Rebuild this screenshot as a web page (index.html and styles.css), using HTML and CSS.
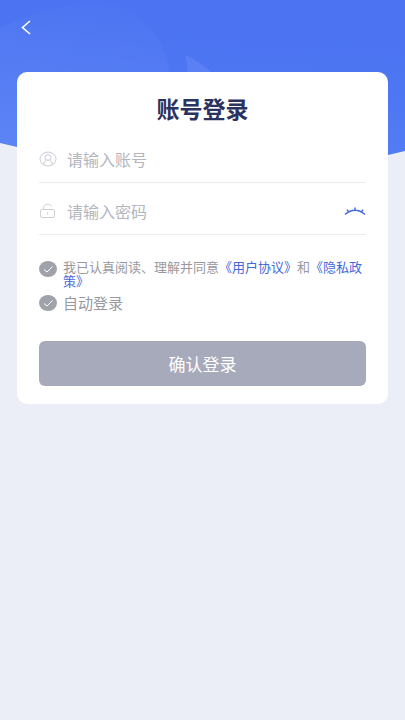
FILE: index.html
```html
<!DOCTYPE html>
<html lang="zh-CN">
<head>
<meta charset="utf-8">
<meta name="viewport" content="width=device-width, initial-scale=1">
<title>账号登录</title>
<link rel="stylesheet" href="styles.css">
</head>
<body>
<svg class="backdrop" viewBox="0 0 405 220" preserveAspectRatio="none" aria-hidden="true">
  <defs>
    <linearGradient id="sky" x1="0.6" y1="0" x2="0.5" y2="1">
      <stop offset="0" stop-color="#4b73f2"/>
      <stop offset="0.5" stop-color="#4e77f3"/>
      <stop offset="1" stop-color="#5682f6"/>
    </linearGradient>
    <linearGradient id="glow" x1="0.6" y1="0" x2="0.4" y2="1">
      <stop offset="0" stop-color="#fff" stop-opacity="0.01"/>
      <stop offset="0.6" stop-color="#fff" stop-opacity="0.05"/>
    </linearGradient>
  </defs>
  <path fill="url(#sky)" d="M0 0H405V151L388 155L230 190Q205 195 180 188L17 147L0 143Z"/>
  <path fill="url(#glow)" d="M0 28Q45 4 103 3C142 8 168 38 170 80V150H0Z"/>
  <path fill="#fff" fill-opacity="0.08" d="M185 55Q198 60 212 73H187Q188 64 185 55Z"/>
</svg>
<header class="topbar">
  <a class="back" href="#" aria-label="返回">
    <svg width="12" height="16" viewBox="0 0 12 16" aria-hidden="true"><path d="M10 2L2.500 8.500L10 15" fill="none" stroke="#fff" stroke-width="1.600"/></svg>
  </a>
</header>
<main class="card">
  <h1 class="title">账号登录</h1>
  <form>
    <div class="field">
      <label class="field-icon" for="account" aria-label="账号">
        <svg width="18" height="16" viewBox="0 0 18 16" fill="none" stroke="#c9ccd4" aria-hidden="true">
          <ellipse cx="9" cy="8" rx="8" ry="7"/>
          <ellipse cx="9" cy="6.500" rx="3" ry="2.800"/>
          <path d="M4.500 13.500C4.800 11 6 9.800 7.500 9M13.500 13.500C13.200 11 12 9.800 10.500 9"/>
        </svg>
      </label>
      <input class="field-input" id="account" type="text" placeholder="请输入账号">
    </div>
    <div class="field">
      <label class="field-icon" for="password" aria-label="密码">
        <svg width="18" height="16" viewBox="0 0 18 16" fill="none" stroke="#cdd0d7" aria-hidden="true">
          <rect x="1.500" y="6.500" width="14" height="8" rx="1.500"/>
          <path d="M4.500 6.500V5C4.500 0.300 11 0 12.500 3.500M8.500 9.500V11.500"/>
        </svg>
      </label>
      <input class="field-input" id="password" type="password" placeholder="请输入密码">
      <button class="reveal" type="button" aria-label="显示密码">
        <svg width="22" height="10" viewBox="0 0 22 10" fill="none" stroke="#4269e0" stroke-width="1.500" aria-hidden="true">
          <path d="M1 8.500Q11 0 21 8.500M11 4.500V1.500M4.600 6L3 3.600M17.400 6L19 3.600"/>
        </svg>
      </button>
    </div>
    <div class="option agreement">
      <span class="tick">
        <input id="agree" type="checkbox" checked>
        <svg viewBox="0 0 18 16" aria-hidden="true"><path d="M5 8.500L8 11L13.500 5.500"/></svg>
      </span>
      <label for="agree">我已认真阅读、理解并同意<a href="#">《用户协议》</a>和<a href="#">《隐私政策》</a></label>
    </div>
    <div class="option auto">
      <span class="tick">
        <input id="auto" type="checkbox" checked>
        <svg viewBox="0 0 18 16" aria-hidden="true"><path d="M5 8.500L8 11L13.500 5.500"/></svg>
      </span>
      <label for="auto">自动登录</label>
    </div>
    <button class="submit" type="submit">确认登录</button>
  </form>
</main>
</body>
</html>
```
FILE: styles.css
```css
* {
  box-sizing: border-box;
}

body {
  margin: 0;
  min-height: 100vh;
  background: #ebeef6;
  font-family: "Noto Sans CJK SC", sans-serif;
  color: #97999f;
}

button,
input {
  font: inherit;
}

.backdrop {
  position: absolute;
  top: 0;
  left: 0;
  z-index: -1;
  width: 100%;
  height: 220px;
}

.topbar {
  display: flex;
  height: 72px;
  padding: 19px 20px;
}

.back {
  display: block;
  height: 16px;
}

.back svg {
  display: block;
}

.card {
  margin: 0 17px;
  padding: 20px 22px 18px;
  border-radius: 10px;
  background: #fff;
}

.title {
  margin: 0 0 7px;
  font-size: 23px;
  font-weight: 700;
  line-height: 32px;
  text-align: center;
  color: #2a3260;
}

.field {
  display: flex;
  align-items: center;
  height: 52px;
  padding-top: 4px;
  border-bottom: 1px solid #ececef;
}

.field-icon {
  display: flex;
  width: 28px;
}

.field-input {
  flex: 1;
  min-width: 0;
  height: 26px;
  padding: 0;
  border: 0;
  outline: 0;
  background: none;
  font-size: 16px;
  color: #2a3260;
}

.field-input::placeholder {
  color: #b3b6bd;
}

.reveal {
  display: flex;
  padding: 0;
  border: 0;
  background: none;
}

.option {
  display: flex;
  gap: 6px;
}

.agreement {
  margin-top: 25px;
  font-size: 13px;
  line-height: 14px;
}

.agreement .tick {
  margin-top: 1px;
}

.auto {
  align-items: center;
  margin-top: 5px;
  font-size: 15px;
  line-height: 20px;
}

.option a {
  color: #4468dc;
  text-decoration: none;
}

.tick {
  position: relative;
  flex: none;
  width: 18px;
  height: 16px;
}

.tick input {
  display: block;
  width: 100%;
  height: 100%;
  margin: 0;
  border-radius: 50%;
  background: #a0a2a9;
  appearance: none;
}

.tick svg {
  position: absolute;
  inset: 0;
  fill: none;
  stroke: #fff;
  pointer-events: none;
}

.submit {
  display: block;
  width: 100%;
  height: 45px;
  margin-top: 28px;
  padding: 0;
  border: 0;
  border-radius: 6px;
  background: #a7aaba;
  font-size: 17px;
  color: #fff;
}
```
